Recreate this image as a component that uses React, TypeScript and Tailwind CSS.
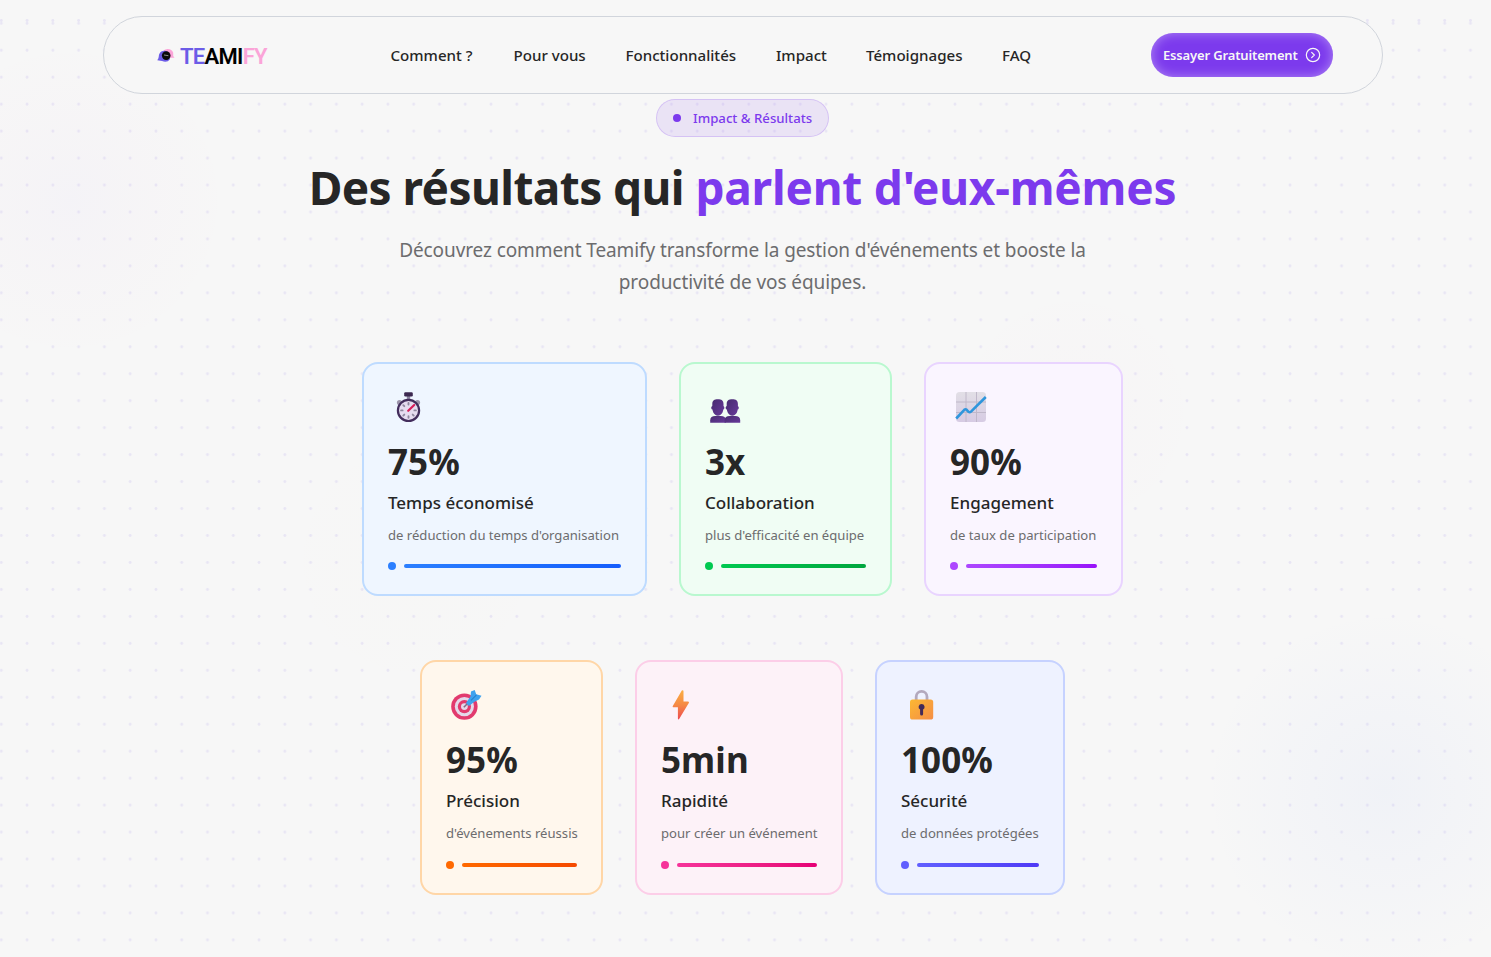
import type { ReactNode } from "react";
import { CircleChevronRight } from "lucide-react";

const Stopwatch = () => (
  <svg viewBox="0 0 32 32" className="size-8">
    <circle cx="6.5" cy="11.5" r="2.6" fill="#9c94ab" />
    <circle cx="24.5" cy="11.5" r="2.6" fill="#9c94ab" />
    <rect x="13.8" y="4" width="3.4" height="5" fill="#8d86a0" />
    <rect x="11.2" y="1.3" width="8.6" height="4.2" rx="1.2" fill="#3c2850" />
    <circle cx="15.5" cy="19.4" r="10.6" fill="#e6dcf0" stroke="#432d5c" strokeWidth="2.2" />
    <path d="M15.5 12v1.500M15.5 25.300v1.500M8.1 19.4h1.500M21.400 19.4h1.500M10.3 14.2l1 1M19.7 23.6l1 1M10.3 24.6l1-1" stroke="#8f879e" strokeWidth="1.9" strokeLinecap="round" />
    <path d="M15.2 19.8l6-5.8" stroke="#d81e5b" strokeWidth="2.2" strokeLinecap="round" />
  </svg>
);

const People = () => (
  <svg viewBox="0 0 32 32" className="size-8">
    <defs>
      <linearGradient id="bust" x1="0" x2="1" y1="0" y2="1">
        <stop stopColor="#472b70" />
        <stop offset="1" stopColor="#67399a" />
      </linearGradient>
    </defs>
    {[0, 14.4].map((x) => (
      <g key={x} transform={`translate(${x} 0)`} fill="url(#bust)">
        <path d="M0.2 31.7v-2.500c0-3 2-4.3 5-4.3h5.600c3 0 5 1.300 5 4.300v2.500z" />
        <rect x="1.200" y="15" width="13.200" height="3.600" rx="1.700" />
        <path d="M2.300 13c0-3.300 2-4.700 5.600-4.700s5.600 1.400 5.600 4.700c0 3 .2 6-1 8.500c-1 2-2.600 3.200-4.600 3.200s-3.600-1.200-4.600-3.200c-1.200-2.500-1-5.500-1-8.500z" />
      </g>
    ))}
  </svg>
);

const Chart = () => (
  <svg viewBox="0 0 32 32" className="size-8">
    <defs>
      <linearGradient id="sheet" x1="0" x2="0" y1="0" y2="1">
        <stop stopColor="#e2dfe6" />
        <stop offset="1" stopColor="#d6cbe3" />
      </linearGradient>
    </defs>
    <rect x="1" y="1" width="30" height="30" rx="3.500" fill="url(#sheet)" />
    <path d="M11 1v30M21.500 1v30M1 11h30M1 21.500h30" stroke="#c0b8ca" strokeWidth="1" />
    <path d="M1.200 27.500L9.300 18.800Q10.500 17.700 11.700 18.800L13.500 20.800Q14.700 21.800 16 20.600L30.800 6" fill="none" stroke="#2f96dc" strokeWidth="2.600" />
  </svg>
);

const Target = () => (
  <svg viewBox="0 0 32 32" className="size-8">
    <circle cx="13.400" cy="17.600" r="13.200" fill="#e23a6e" />
    <circle cx="13.400" cy="17.600" r="9.600" fill="#e4d8ea" />
    <circle cx="13.400" cy="17.600" r="6.600" fill="#e23a6e" />
    <circle cx="13.400" cy="17.600" r="3.400" fill="#e4d8ea" />
    <path d="M12.800 18.200L20 11" stroke="#7d6c88" strokeWidth="1.600" />
    <path d="M15 14L19.500 7.500L20 2.500L23.700 1L25.200 5.200L30.500 6.700L28 10.500L23.500 12.700L17.800 17Z" fill="#3fa2ee" />
    <path d="M20 11.400L25.500 5.800" stroke="#2380d0" strokeWidth="1.100" />
  </svg>
);

const Bolt = () => (
  <svg viewBox="0 0 32 32" className="size-8">
    <defs>
      <linearGradient id="bolt" x1="0" x2="0" y1="0" y2="1">
        <stop stopColor="#fbae42" />
        <stop offset="0.500" stopColor="#f58a45" />
        <stop offset="1" stopColor="#ee4a50" />
      </linearGradient>
    </defs>
    <path d="M15.800 1.500Q17.500 .6 17.500 2.500V12.500H22Q23.600 12.600 22.800 14L13.300 29.800Q11.900 31.200 11.900 29.200V18.300H7.400Q6.200 18.200 6.800 16.900Z" fill="url(#bolt)" />
  </svg>
);

const Lock = () => (
  <svg viewBox="0 0 32 32" className="size-8">
    <defs>
      <linearGradient id="lock" x1="0" x2="1" y1="0" y2="1">
        <stop stopColor="#fcb832" />
        <stop offset="1" stopColor="#f58e46" />
      </linearGradient>
    </defs>
    <path d="M10.200 12V7.800a5.400 5.400 0 0 1 10.800 0V12" fill="none" stroke="#b3a9bd" strokeWidth="2.800" />
    <rect x="4" y="10.400" width="23.200" height="20.200" rx="2.600" fill="url(#lock)" />
    <path d="M15.600 15a3 3 0 0 1 1.500 5.600V25a1.500 1.500 0 0 1-3 0v-4.400a3 3 0 0 1 1.500-5.600z" fill="#432a58" />
  </svg>
);

type CardProps = {
  icon: ReactNode;
  value: string;
  title: string;
  text: string;
  box: string;
  dot: string;
  bar: string;
};

const rows: CardProps[][] = [
  [
    { icon: <Stopwatch />, value: "75%", title: "Temps économisé", text: "de réduction du temps d'organisation", box: "w-[285px] bg-blue-50 border-[#bedbff]", dot: "bg-[#2b7fff]", bar: "from-[#2b7fff] to-[#155dfc]" },
    { icon: <People />, value: "3x", title: "Collaboration", text: "plus d'efficacité en équipe", box: "w-[213px] bg-green-50 border-[#b9f8cf]", dot: "bg-[#00c950]", bar: "from-[#00c950] to-[#00a63e]" },
    { icon: <Chart />, value: "90%", title: "Engagement", text: "de taux de participation", box: "w-[199px] bg-purple-50 border-[#e9d4ff]", dot: "bg-[#ad46ff]", bar: "from-[#ad46ff] to-[#9810fa]" },
  ],
  [
    { icon: <Target />, value: "95%", title: "Précision", text: "d'événements réussis", box: "w-[183px] bg-orange-50 border-[#ffd6a7]", dot: "bg-[#ff6900]", bar: "from-[#ff6900] to-[#f54900]" },
    { icon: <Bolt />, value: "5min", title: "Rapidité", text: "pour créer un événement", box: "w-[208px] bg-pink-50 border-[#fccee8]", dot: "bg-[#f6339a]", bar: "from-[#f6339a] to-[#e60076]" },
    { icon: <Lock />, value: "100%", title: "Sécurité", text: "de données protégées", box: "w-[190px] bg-indigo-50 border-[#c6d2ff]", dot: "bg-[#615fff]", bar: "from-[#615fff] to-[#4f39f6]" },
  ],
];

function Card({ icon, value, title, text, box, dot, bar }: CardProps) {
  return (
    <article className={`flex flex-col rounded-2xl border-2 px-6 pt-[27px] pb-6 whitespace-nowrap ${box}`}>
      <div className="pl-[5px]">{icon}</div>
      <p className="mt-[19px] text-[35px] leading-10 font-bold tracking-[0.1px] text-[#262626]">{value}</p>
      <h3 className="mt-[7px] text-[17px] leading-7 font-medium text-[#262626]">{title}</h3>
      <p className="mt-2 text-[13.1px] leading-5 text-[#6c6c6e]">{text}</p>
      <div className="mt-auto flex items-center gap-2">
        <span className={`size-2 rounded-full ${dot}`} />
        <span className={`h-1 flex-1 rounded-full bg-linear-to-r ${bar}`} />
      </div>
    </article>
  );
}

const links = [
  ["Comment ?", "w-[83px]"],
  ["Pour vous", "w-[72px]"],
  ["Fonctionnalités", "w-[110.5px]"],
  ["Impact", "w-[50px]"],
  ["Témoignages", "w-[96px]"],
  ["FAQ", "w-[30px]"],
];

function Backdrop() {
  return (
    <svg className="absolute inset-0" width="1491" height="957" aria-hidden="true">
      <defs>
        <pattern id="dots" x="-11.600" y="9.800" width="25.775" height="26.960" patternUnits="userSpaceOnUse">
          <circle cx="12.900" cy="13.500" r="1.450" fill="#e8e5f4" />
        </pattern>
        <radialGradient id="violet"><stop stopColor="#8b5cf6" stopOpacity=".025" /><stop offset="1" stopColor="#ec4899" stopOpacity="0" /></radialGradient>
        <radialGradient id="blue"><stop stopColor="#6088f5" stopOpacity=".045" /><stop offset="1" stopColor="#6088f5" stopOpacity="0" /></radialGradient>
        <radialGradient id="amber"><stop stopColor="#f5c060" stopOpacity=".01" /><stop offset="1" stopColor="#f5c060" stopOpacity="0" /></radialGradient>
        <radialGradient id="rose"><stop stopColor="#ec4899" stopOpacity=".012" /><stop offset="1" stopColor="#ec4899" stopOpacity="0" /></radialGradient>
      </defs>
      <rect width="1485" height="957" fill="url(#dots)" />
      {Array.from({ length: 58 }, (_, i) => (
        <circle key={i} cx={1.3 + i * 25.775} cy="20.500" r="1.450" fill="#e8e5f4" />
      ))}
      <circle cx="70" cy="200" r="160" fill="url(#violet)" />
      <circle cx="415" cy="560" r="140" fill="url(#amber)" />
      <circle cx="1075" cy="410" r="130" fill="url(#rose)" />
      <circle cx="1385" cy="790" r="180" fill="url(#blue)" />
    </svg>
  );
}

export default function App() {
  return (
    <div className="relative h-[957px] w-full overflow-hidden bg-[#f7f7f7] font-['Noto_Sans',sans-serif]">
      <Backdrop />
      <div className="relative flex w-[1485px] flex-col items-center pt-4">
        <header className="ml-px flex h-[78px] w-[1280px] items-center rounded-full border border-[#d1d5dc] bg-[#f7f7f7] pl-[53px]">
          <div className="flex w-[233.5px] items-center">
            <svg viewBox="0 0 18 16" className="h-4 w-[18px]" aria-hidden="true">
              <path d="M5 6.500A5.900 5.900 0 0 1 16.200 5.800V9L17.500 10.800H9z" fill="#fba4d8" />
              <path d="M1.800 9A5.700 5.700 0 0 1 10.500 4.500L13 12.200Q10 16.300 5 14L0.300 13.200Q1.900 11 1.800 9z" fill="#6c5ce7" />
              <circle cx="9.200" cy="8.600" r="4.300" fill="#0a0a0a" />
              <path d="M7 8l4.400 .700" stroke="#999" strokeWidth=".9" />
            </svg>
            <span className="ml-[5px] pt-[3px] font-['Roboto',sans-serif] text-[22px] leading-7 font-semibold tracking-[-0.7px]">
              <span className="text-[#6c5ce7]">TE</span>
              <span className="text-black">AMI</span>
              <span className="text-[#fba4d8]">FY</span>
            </span>
          </div>
          <nav className="flex gap-10 text-[15.1px] leading-6 font-medium whitespace-nowrap text-[#262626]">
            {links.map(([label, width]) => (
              <a key={label} className={width}>{label}</a>
            ))}
          </nav>
          <button className="ml-[119px] flex h-11 w-[182px] items-center gap-[7px] rounded-full bg-[#7c3aed] pl-3 text-[13px] font-semibold tracking-[-0.15px] whitespace-nowrap text-[#f7f7f7] shadow-[inset_0_0_12px_rgba(255,255,255,0.4)]">
            <span className="pt-0.5">Essayer Gratuitement</span>
            <CircleChevronRight size={16} strokeWidth={1.8} />
          </button>
        </header>
        <div className="mt-[5px] flex h-[38px] w-[173px] items-center gap-3 rounded-full border border-[#7c3aed]/20 bg-[#7c3aed]/10 pl-4 text-[13.2px] font-medium whitespace-nowrap text-[#7c3aed]">
          <span className="size-2 rounded-full bg-[#7c3aed]" />
          <span className="pt-0.5">{"Impact & Résultats"}</span>
        </div>
        <h1 className="mt-5 text-[46px] leading-[60px] font-bold tracking-[-0.58px] whitespace-nowrap text-[#262626]">
          Des résultats qui <span className="tracking-[-0.22px] text-[#7c3aed]">parlent d'eux-mêmes</span>
        </h1>
        <p className="mt-[17px] text-center text-[19px] leading-8 tracking-[-0.1px] whitespace-nowrap text-[#6c6c6e]">
          Découvrez comment Teamify transforme la gestion d'événements et booste la
          <br />
          productivité de vos équipes.
        </p>
        <main className="mt-16 flex flex-col items-center gap-16">
          <section className="flex h-[234px] gap-8">
            {rows[0].map((card) => (
              <Card key={card.title} {...card} />
            ))}
          </section>
          <section className="flex h-[235px] gap-8">
            {rows[1].map((card) => (
              <Card key={card.title} {...card} />
            ))}
          </section>
        </main>
      </div>
    </div>
  );
}
